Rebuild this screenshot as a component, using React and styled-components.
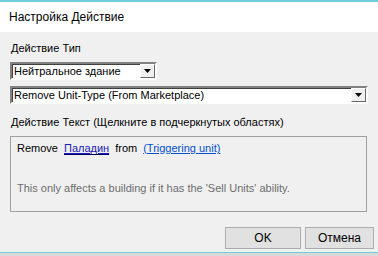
import React from 'react'
import styled, { createGlobalStyle } from 'styled-components'

const Global = createGlobalStyle`
  html, body {
    margin: 0;
    padding: 0;
    background: #f0f0f0;
  }
  body {
    font-family: "Liberation Sans", Arial, sans-serif;
    font-size: 11px;
    color: #000;
  }
`

function Dropdown({ width, children }) {
  return (
    <StyledSelect $width={width}>
      <SelectText>{children}</SelectText>
      <ArrowButton>
        <svg width="7" height="4" viewBox="0 0 7 4">
          <path d="M0 0 H7 L3.5 4 Z" fill="#000" />
        </svg>
      </ArrowButton>
    </StyledSelect>
  )
}

export default function App() {
  return (
    <>
      <Global />
      <Window>
        <TitleBar>Настройка Действие</TitleBar>
        <Body>
          <Label>Действие Тип</Label>
          <Dropdown width="147px">Нейтральное здание</Dropdown>
          <Dropdown width="358px">Remove Unit-Type (From Marketplace)</Dropdown>
          <Label $top="6px">Действие Текст (Щелкните в подчеркнутых областях)</Label>
          <TextBox>
            <TextLine>
              <span>Remove</span>
              <Link $focused>Паладин</Link>
              <span>from</span>
              <Link>(Triggering unit)</Link>
            </TextLine>
            <Note>This only affects a building if it has the 'Sell Units' ability.</Note>
          </TextBox>
          <ButtonRow>
            <Button $width="76px">OK</Button>
            <Button $width="69px">Отмена</Button>
          </ButtonRow>
        </Body>
        <BottomEdge />
      </Window>
    </>
  )
}

const Window = styled.div`
  width: 378px;
  height: 256px;
  display: flex;
  flex-direction: column;
  background: #f0f0f0;
  overflow: hidden;
`

const TitleBar = styled.div`
  height: 30px;
  flex-shrink: 0;
  border-top: 2px solid #6fcfd9;
  background: #ffffff;
  padding-left: 9px;
  display: flex;
  align-items: center;
  font-size: 12px;
  color: #000;
`

const Body = styled.div`
  padding: 10px 10px 0 10px;
  display: flex;
  flex-direction: column;
`

const Label = styled.div`
  padding-left: 1px;
  line-height: 13px;
  height: 13px;
  margin-top: ${p => p.$top || '0'};
  margin-bottom: 7px;
  white-space: nowrap;
`

const StyledSelect = styled.div`
  width: ${p => p.$width};
  height: 18px;
  flex-shrink: 0;
  box-sizing: border-box;
  border-style: solid;
  border-width: 2px;
  border-color: #828282 #ffffff #ffffff #828282;
  box-shadow: inset 1px 1px 0 #404040;
  background: #fff;
  display: flex;
  align-items: stretch;
  margin-bottom: 6px;
`

const SelectText = styled.div`
  flex: 1;
  padding-left: 2px;
  line-height: 14px;
  white-space: nowrap;
  overflow: hidden;
`

const ArrowButton = styled.div`
  width: 15px;
  box-sizing: border-box;
  background: #f0f0f0;
  border-style: solid;
  border-width: 1px;
  border-color: #ffffff #696969 #696969 #ffffff;
  display: flex;
  align-items: center;
  justify-content: center;
`

const TextBox = styled.div`
  height: 76px;
  width: 357px;
  flex-shrink: 0;
  box-sizing: border-box;
  border: 1px solid #a0a0a0;
  padding: 5px 6px 0 6px;
  display: flex;
  flex-direction: column;
`

const TextLine = styled.div`
  display: flex;
  gap: 6px;
  line-height: 13px;
  white-space: nowrap;
`

const Link = styled.span`
  color: ${p => (p.$focused ? '#1c1cb8' : '#0050d0')};
  text-decoration: underline;
  ${p => p.$focused && 'border-bottom: 1px solid #000060; line-height: 12px;'}
`

const Note = styled.div`
  margin-top: 27px;
  color: #6d6d6d;
  line-height: 13px;
  white-space: nowrap;
`

const ButtonRow = styled.div`
  display: flex;
  justify-content: flex-end;
  gap: 4px;
  margin-top: 15px;
  margin-right: -6px;
`

const Button = styled.div`
  width: ${p => p.$width};
  height: 22px;
  box-sizing: border-box;
  background: #e1e1e1;
  border: 1px solid #adadad;
  display: flex;
  align-items: center;
  justify-content: center;
  font-size: 12px;
`

const BottomEdge = styled.div`
  margin-top: auto;
  height: 3px;
  flex-shrink: 0;
  border-top: 1px solid #6fcfd9;
  background: #d9d9d9;
`
